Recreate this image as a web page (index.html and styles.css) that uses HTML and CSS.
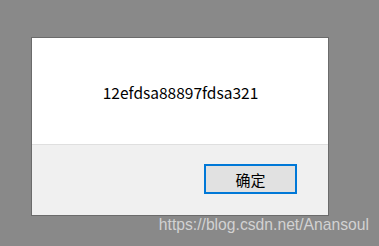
FILE: index.html
```html
<!DOCTYPE html>
<html>
<head>
<meta charset="utf-8">
<link rel="stylesheet" href="styles.css">
</head>
<body>
<div class="screen">
  <div class="dialog">
    <div class="body">
      <p class="msg">12efdsa88897fdsa321</p>
    </div>
    <div class="footer">
      <button class="ok">确定</button>
    </div>
  </div>
  <div class="watermark">https://blog.csdn.net/Anansoul</div>
</div>
</body>
</html>
```

FILE: styles.css
```css
html, body {
  margin: 0;
  padding: 0;
  background: #898989;
}
.screen {
  width: 379px;
  height: 246px;
  padding: 37px 0 0 31px;
  box-sizing: border-box;
  position: relative;
}
.dialog {
  width: 298px;
  height: 179px;
  box-sizing: border-box;
  border: 1px solid #6b6b6b;
  display: flex;
  flex-direction: column;
  background: #f0f0f0;
}
.body {
  height: 107px;
  background: #fff;
  border-bottom: 1px solid #dfdfdf;
  display: flex;
  align-items: center;
  justify-content: center;
  box-sizing: border-box;
}
.msg {
  margin: 0;
  margin-left: 1px;
  margin-top: 2px;
  font-family: "Noto Sans CJK SC", "Noto Sans", sans-serif;
  font-size: 15.5px;
  color: #000;
}
.footer {
  flex: 1;
  display: flex;
  justify-content: flex-end;
  align-items: flex-start;
  padding: 19px 31px 0 0;
}
.ok {
  width: 93px;
  height: 30px;
  box-sizing: border-box;
  border: 2px solid #0078d7;
  background: #e1e1e1;
  font-family: "Noto Sans CJK SC", sans-serif;
  font-size: 15px;
  color: #000;
  padding: 0;
  margin: 0;
}
.watermark {
  position: absolute;
  right: 10px;
  top: 216px;
  font-family: "Liberation Sans", Arial, sans-serif;
  font-size: 15.7px;
  color: #d2d2d2;
}
```
